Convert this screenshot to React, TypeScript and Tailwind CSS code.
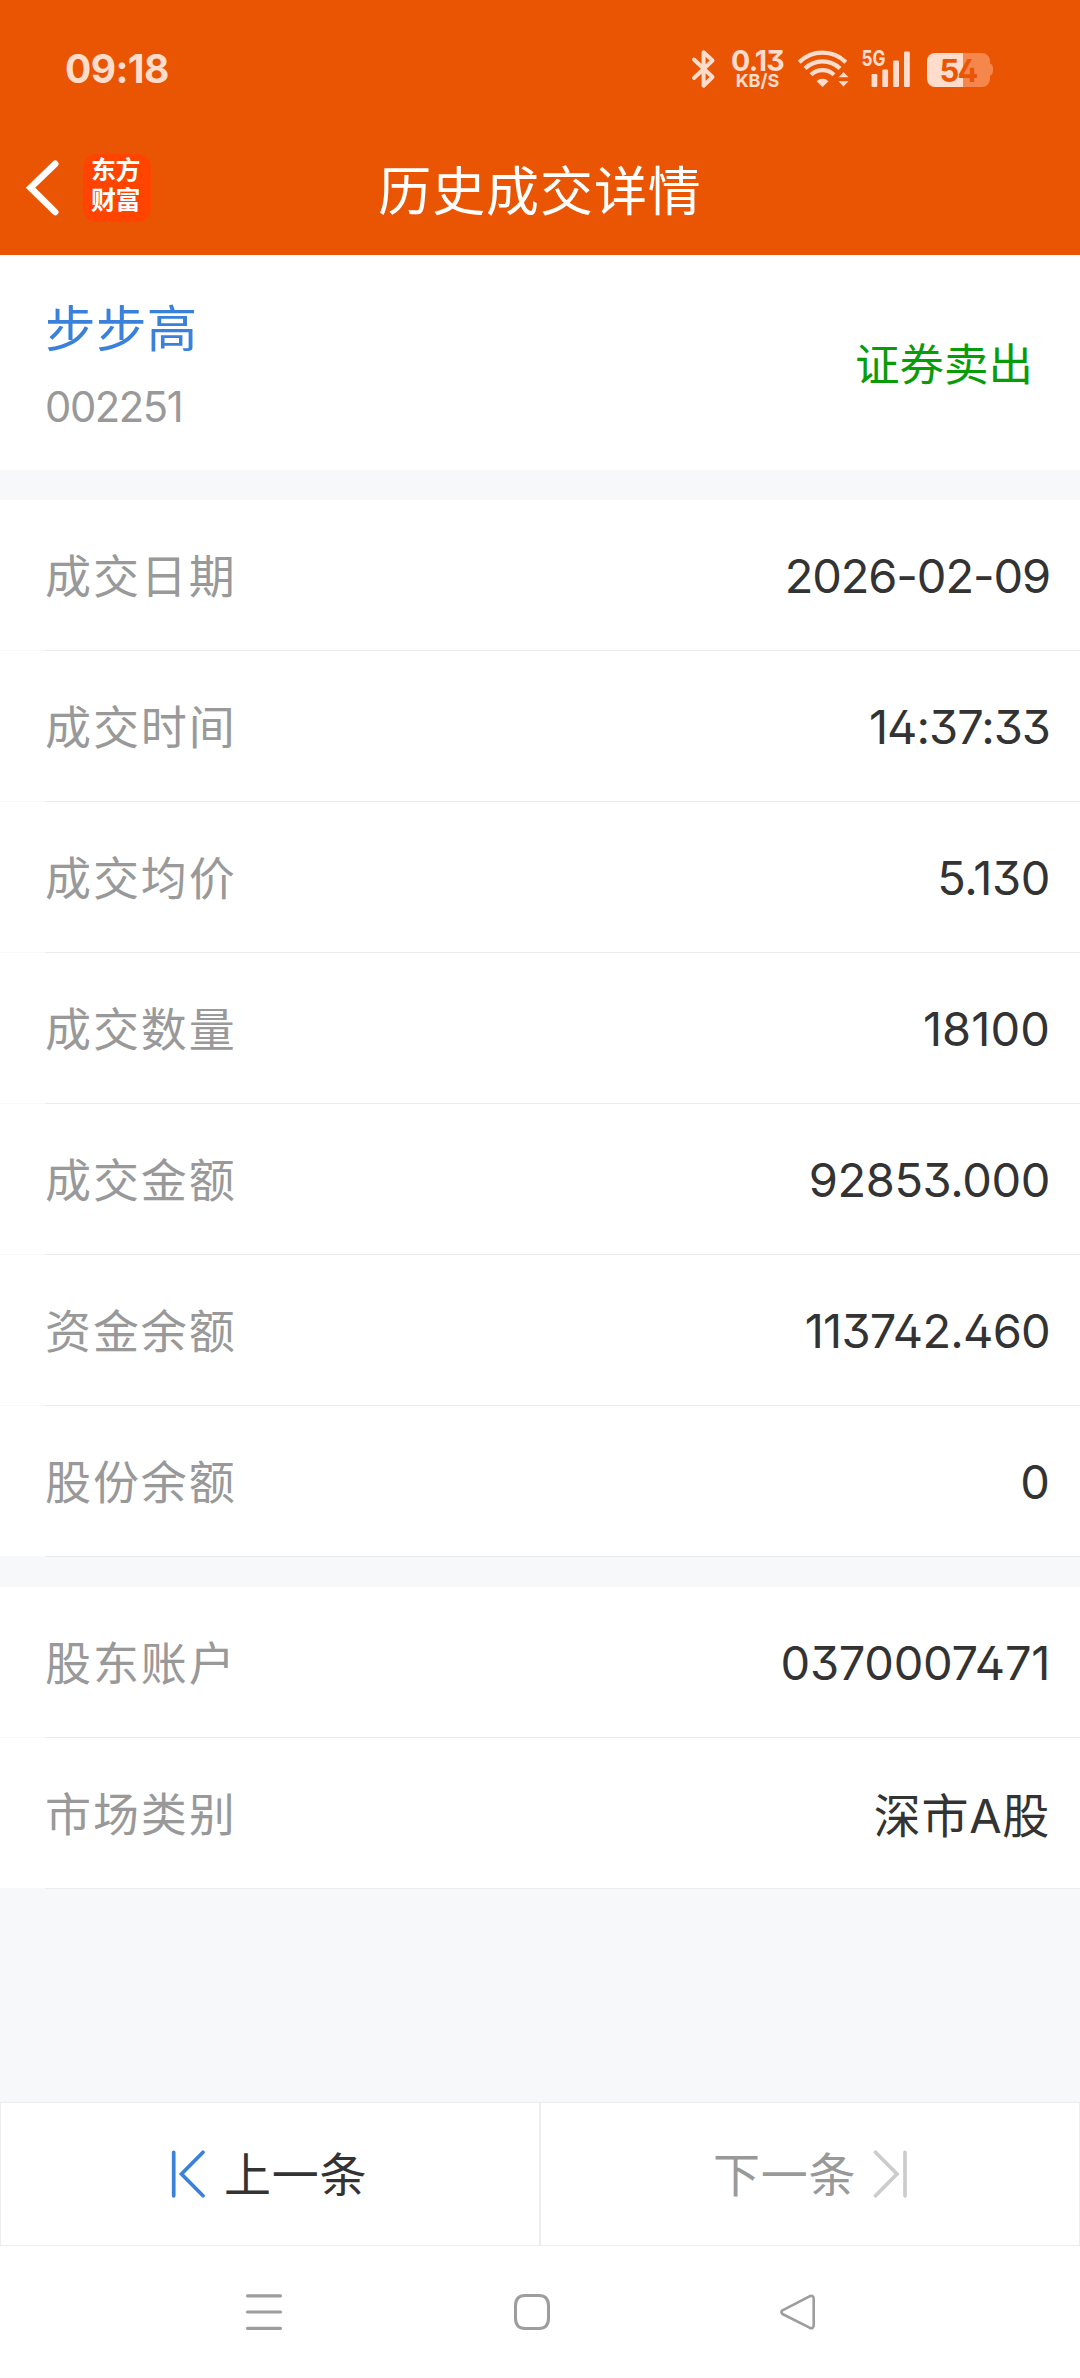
import type { ReactNode } from "react";

type Item = { label: string; value: string; tracking: string };

const tradeItems: Item[] = [
  { label: "成交日期", value: "2026-02-09", tracking: "tracking-[-1.12px]" },
  { label: "成交时间", value: "14:37:33", tracking: "tracking-[-1px]" },
  { label: "成交均价", value: "5.130", tracking: "tracking-[-0.4px]" },
  { label: "成交数量", value: "18100", tracking: "tracking-[0.1px]" },
  { label: "成交金额", value: "92853.000", tracking: "tracking-[-0.4px]" },
  { label: "资金余额", value: "113742.460", tracking: "tracking-[-0.75px]" },
  { label: "股份余额", value: "0", tracking: "tracking-normal" },
];

const accountItems: Item[] = [
  { label: "股东账户", value: "0370007471", tracking: "tracking-[-0.3px]" },
  { label: "市场类别", value: "深市A股", tracking: "tracking-[0.7px] pt-[3px]" },
];

function StatusBar() {
  return (
    <div className="flex h-[136px] items-center pr-[87px] pl-[65px] text-[#ffdccc]">
      <span className="text-[39px] leading-none font-bold tracking-[-0.6px]">09:18</span>
      <div className="mt-[2px] ml-auto flex h-[38px] items-start">
        <svg className="h-[38px] w-[23px] overflow-visible" viewBox="0 0 23 38" fill="none" stroke="currentColor" strokeWidth="4" strokeLinejoin="round" strokeLinecap="round">
          <path d="M2 9.5 20.500 27 11.6 35.7V2.3L20.500 10.5 2 28" />
        </svg>
        <div className="ml-[17px] flex w-[51px] flex-col items-center font-bold whitespace-nowrap">
          <span className="text-[28.5px] leading-[22px] tracking-[-0.8px]">0.13</span>
          <span className="text-[18px] leading-[17px]">KB/S</span>
        </div>
        <svg className="ml-[15px] h-[38px] w-[51px]" viewBox="0 0 51 38" fill="none" stroke="currentColor" strokeWidth="4.2">
          <path d="M1.2 12.3a33 33 0 0 1 46.6 0M7 18.6a25 25 0 0 1 35 0M13 24.8a16.6 16.6 0 0 1 23 0" />
          <path d="M18.5 31.2a8.5 8.5 0 0 1 12 0L24.5 37Z" fill="currentColor" stroke="none" />
          <path d="M40.5 27.3 45.5 22l5 5.3ZM40.5 31.3l5 5.3 5-5.3Z" fill="currentColor" stroke="none" />
        </svg>
        <svg className="ml-[13px] h-[38px] w-[48px] overflow-visible font-bold" viewBox="0 0 48 38" fill="currentColor">
          <text x="-0.5" y="16.3" fontSize="21.5" textLength="24" lengthAdjust="spacingAndGlyphs">5G</text>
          <rect x="9.5" y="24" width="5.8" height="13" rx="1.2" />
          <rect x="20.3" y="19.5" width="5.8" height="17.5" rx="1.2" />
          <rect x="31.2" y="10.5" width="5.8" height="26.5" rx="1.2" />
          <rect x="42" y="1.5" width="5.8" height="35.5" rx="1.2" />
        </svg>
        <svg className="ml-[17px] h-[38px] w-[66px] overflow-visible font-bold" viewBox="0 0 66 38">
          <path d="M36 3h19a8 8 0 0 1 8 8v2.5a3 5.8 0 0 1 0 12V29a8 8 0 0 1-8 8H36Z" fill="#f5864c" />
          <path d="M36 3H8a8 8 0 0 0-8 8v18a8 8 0 0 0 8 8h28Z" fill="#ffdccc" />
          <text x="12.5" y="31.5" fontSize="31" textLength="39" fill="#ea5504">54</text>
        </svg>
      </div>
    </div>
  );
}

function TitleBar() {
  return (
    <div className="relative flex h-[104px] items-center pl-[25px] text-white">
      <svg className="h-[56px] w-[34px]" viewBox="0 0 34 56" fill="none" stroke="currentColor" strokeWidth="6.6" strokeLinecap="round">
        <path d="M30.2 3.8 5.5 27.7l24.7 24.3" />
      </svg>
      <div className="ml-[24px] flex size-[68px] flex-col items-start rounded-[14px] bg-[#ff4400] pl-[8px] font-['Noto_Sans_CJK_SC',sans-serif] text-[25px] leading-[29.5px] font-bold tracking-[-0.5px]">
        <span>东方</span>
        <span>财富</span>
      </div>
      <h1 className="absolute inset-x-0 text-center font-['Noto_Sans_CJK_SC',sans-serif] text-[53px] leading-[104px] tracking-[0.9px]">历史成交详情</h1>
    </div>
  );
}

function Row({ label, value, tracking }: Item) {
  return (
    <div className="bg-[#f7f8fa]">
      <div className="flex h-[150px] items-center justify-between bg-white pr-[30px] pl-[45px] leading-[150px]">
        <span className="-mt-[4px] font-['Noto_Sans_CJK_SC',sans-serif] text-[46px] tracking-[1.9px] text-[#999999]">{label}</span>
        <span className={`mt-[2px] text-[47px] text-[#333333] ${tracking}`}>{value}</span>
      </div>
      <div className="ml-[45px] h-px bg-[#ebecee]" />
    </div>
  );
}

function PagerButton({ children, className }: { children: ReactNode; className: string }) {
  return (
    <button className={`flex h-full w-1/2 items-center border-[#ededed] font-['Noto_Sans_CJK_SC',sans-serif] text-[47px] leading-none tracking-[0.7px] ${className}`}>
      {children}
    </button>
  );
}

export default function App() {
  return (
    <div className="flex h-[2378px] w-[1080px] flex-col bg-[#f7f8fa] font-['Inter','Noto_Sans_CJK_SC',sans-serif] [font-feature-settings:'cv02','cv09']">
      <header className="h-[255px] bg-[#ea5504]">
        <StatusBar />
        <TitleBar />
      </header>

      <section className="flex h-[215px] items-center justify-between bg-white pr-[47px] pl-[45px]">
        <div className="pt-[10px]">
          <div className="font-['Noto_Sans_CJK_SC',sans-serif] text-[50.5px] leading-[78px] tracking-[0.4px] text-[#3a81dc]">步步高</div>
          <div className="text-[41.7px] leading-[86px] tracking-[-1.4px] text-[#999999]">002251</div>
        </div>
        <span className="font-['Noto_Sans_CJK_SC',sans-serif] text-[44.5px] leading-none text-[#099c09]">证券卖出</span>
      </section>

      <section className="mt-[30px]">
        {tradeItems.map((item) => (
          <Row key={item.label} {...item} />
        ))}
      </section>

      <section className="mt-[30px]">
        {accountItems.map((item) => (
          <Row key={item.label} {...item} />
        ))}
      </section>

      <div className="mt-auto flex h-[144px] border border-[#ededed] bg-white">
        <PagerButton className="border-r pl-[169px] text-[#333333]">
          <svg className="mr-[18px] h-[48px] w-[36px]" viewBox="0 0 36 48" fill="none" stroke="#3a81dc" strokeWidth="3.7" strokeLinecap="round">
            <path d="M3.7 2.3v43.5M33 2.3 11.5 24 33 45.8" />
          </svg>
          <span className="-mt-[5px]">上一条</span>
        </PagerButton>
        <PagerButton className="border-l pl-[172px] text-[#999999]">
          <span className="-mt-[5px]">下一条</span>
          <svg className="ml-[16px] h-[48px] w-[36px]" viewBox="0 0 36 48" fill="none" stroke="#cccccc" strokeWidth="3.7" strokeLinecap="round">
            <path d="M33 2.3v43.5M3.5 2.3 25 24 3.5 45.8" />
          </svg>
        </PagerButton>
      </div>

      <nav className="flex h-[132px] items-center bg-white pl-[244px] text-[#9d9d9d]">
        <svg className="h-[38px] w-[40px]" viewBox="0 0 40 38" fill="none" stroke="currentColor" strokeWidth="3.2" strokeLinecap="round">
          <path d="M3.5 2.8h33M3.5 19h33M3.5 35.3h33" />
        </svg>
        <svg className="ml-[229px] h-[38px] w-[38px]" viewBox="0 0 38 38" fill="none" stroke="currentColor" strokeWidth="3">
          <path d="M2.5 19V13Q2.5 2.5 12 2.5H26Q35.5 2.5 35.5 13V25Q35.5 35.5 26 35.5H12Q2.5 35.5 2.5 25Z" />
        </svg>
        <svg className="ml-[228px] h-[38px] w-[38px]" viewBox="0 0 38 38" fill="none" stroke="currentColor" strokeWidth="2.6" strokeLinejoin="round">
          <path d="M3.5 17.3 30.5 3.3Q34.7 1.8 34.7 5.8V32Q34.7 36.3 30.5 34.7L3.5 21Q1.2 19 3.5 17.3Z" />
        </svg>
      </nav>
    </div>
  );
}
